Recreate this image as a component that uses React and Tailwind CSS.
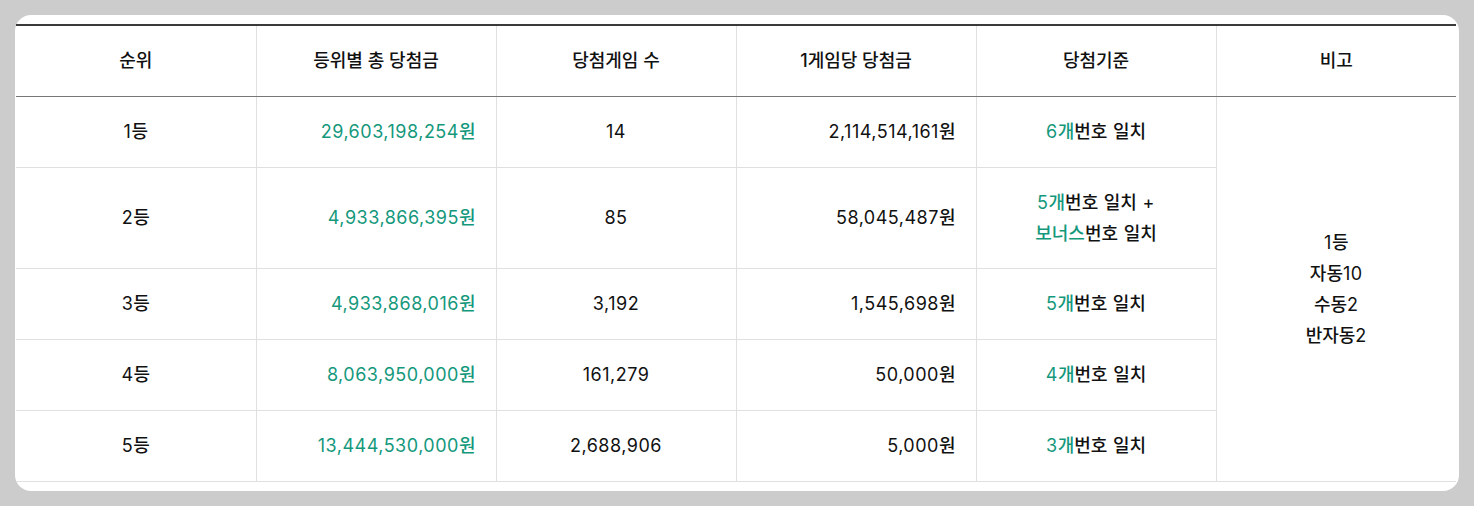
function K({ text, cls = "" }) {
  const parts = text.split(/([\uAC00-\uD7A3]+)/).filter((p) => p !== "");
  return (
    <span className={cls}>
      {parts.map((p, i) =>
        /[\uAC00-\uD7A3]/.test(p) ? (
          <span key={i} className="font-medium tracking-normal">{p}</span>
        ) : (
          <span key={i} className="tracking-[0.5px]">{p}</span>
        )
      )}
    </span>
  );
}

export default function App() {
  const green = "text-[#14987c]";
  const rows = [
    { rank: "1등", total: "29,603,198,254원", count: "14", per: "2,114,514,161원", crit: [["6개", "번호 일치"]] },
    { rank: "2등", total: "4,933,866,395원", count: "85", per: "58,045,487원", crit: [["5개", "번호 일치 +"], ["보너스", "번호 일치"]] },
    { rank: "3등", total: "4,933,868,016원", count: "3,192", per: "1,545,698원", crit: [["5개", "번호 일치"]] },
    { rank: "4등", total: "8,063,950,000원", count: "161,279", per: "50,000원", crit: [["4개", "번호 일치"]] },
    { rank: "5등", total: "13,444,530,000원", count: "2,688,906", per: "5,000원", crit: [["3개", "번호 일치"]] },
  ];
  const heights = ["h-[71px]", "h-[101px]", "h-[71px]", "h-[71px]", "h-[71px]"];
  const td = "border-r border-b border-[#e0e0e0] align-middle";
  return (
    <div className="min-h-[506px] w-[1474px] bg-[#cccccc] pt-[15px] pl-[15px]" style={{ fontFamily: 'Inter, "Noto Sans CJK KR", sans-serif' }}>
      <div className="w-[1444px] h-[476px] bg-white rounded-[16px] pt-[9px] pl-[1px]">
        <table className="w-[1440px] border-collapse table-fixed text-[18px] font-normal text-[#111]">
          <colgroup>
            <col className="w-[240px]" />
            <col className="w-[240px]" />
            <col className="w-[240px]" />
            <col className="w-[240px]" />
            <col className="w-[240px]" />
            <col className="w-[240px]" />
          </colgroup>
          <thead>
            <tr className="h-[71px] border-t-2 border-t-[#3a3a3a]">
              {["순위", "등위별 총 당첨금", "당첨게임 수", "1게임당 당첨금", "당첨기준", "비고"].map((h, i) => (
                <th key={h} className={`font-medium text-[18px] border-b border-b-[#777] ${i < 5 ? "border-r border-r-[#e0e0e0]" : ""}`}>{h}</th>
              ))}
            </tr>
          </thead>
          <tbody>
            {rows.map((r, i) => (
              <tr key={r.rank} className={heights[i]}>
                <td className={`${td} text-center`}><K text={r.rank} /></td>
                <td className={`${td} text-right pr-[20px] ${green}`}><K text={r.total} /></td>
                <td className={`${td} text-center`}><K text={r.count} /></td>
                <td className={`${td} text-right pr-[20px]`}><K text={r.per} /></td>
                <td className={`${td} text-center leading-[31px]`}>
                  {r.crit.map(([a, b], j) => (
                    <div key={j}><K text={a} cls={green} /><K text={b} /></div>
                  ))}
                </td>
                {i === 0 && (
                  <td rowSpan={5} className="border-b border-[#e0e0e0] text-center align-middle leading-[31px]">
                    <div><K text="1등" /></div>
                    <div><K text="자동10" /></div>
                    <div><K text="수동2" /></div>
                    <div><K text="반자동2" /></div>
                  </td>
                )}
              </tr>
            ))}
          </tbody>
        </table>
      </div>
    </div>
  );
}
